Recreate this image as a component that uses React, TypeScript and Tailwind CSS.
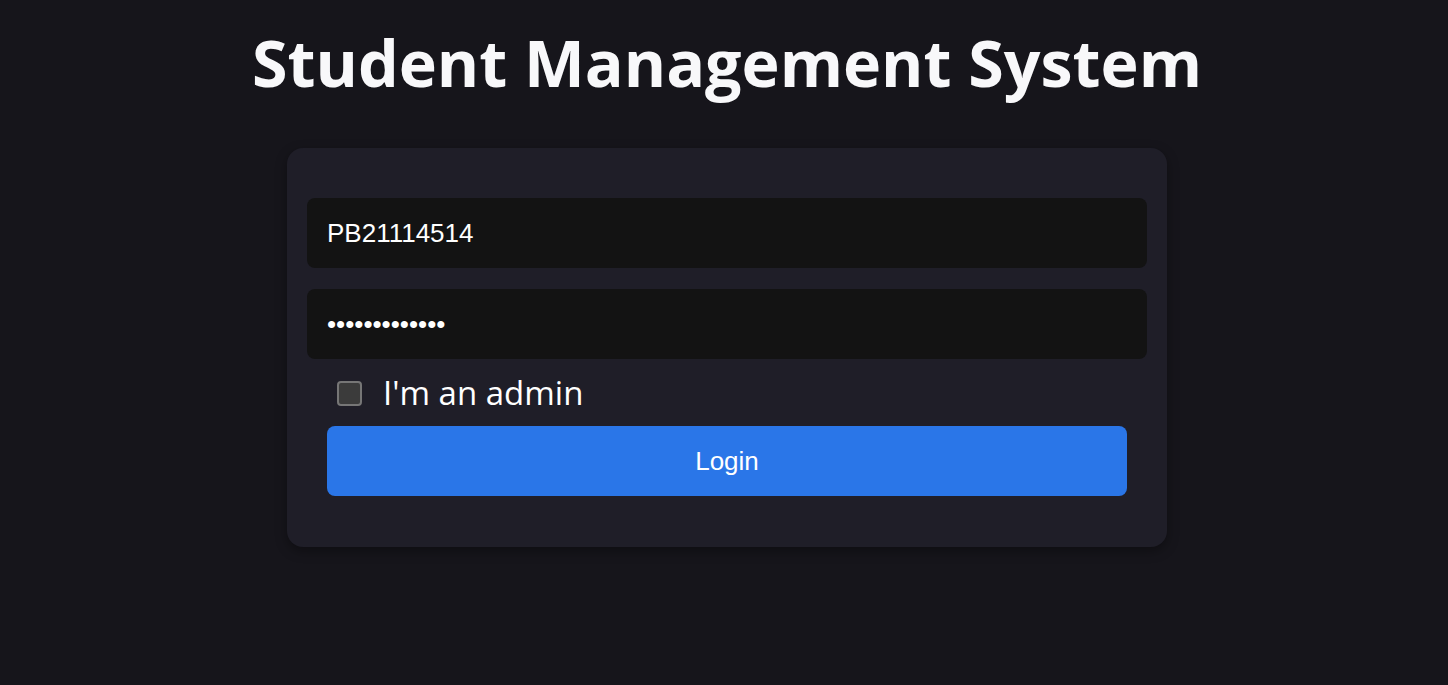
import React, { useState } from "react";

const App: React.FC = () => {
    const [studentId, setStudentId] = useState("PB21114514");
    const [password, setPassword] = useState("1234567890123");
    const [isAdmin, setIsAdmin] = useState(false);

    return (
        <div className="min-h-screen w-full bg-[#16151b] pl-[6px] flex flex-col items-center font-['Open_Sans',sans-serif]">
            <h1 className="mt-[22px] text-[64.5px] leading-[80px] font-bold text-[#f8f8fa]">
                Student Management System
            </h1>

            <form
                className="mt-[46px] w-[880px] rounded-2xl bg-[#1f1e28] px-5 pt-[50px] pb-[51px] shadow-[0_4px_12px_rgba(0,0,0,0.35)] flex flex-col"
                onSubmit={(e) => e.preventDefault()}
            >
                <input
                    type="text"
                    value={studentId}
                    onChange={(e) => setStudentId(e.target.value)}
                    className="h-[70px] w-full rounded-lg bg-[#131313] px-5 text-[26px] text-white outline-none font-['Liberation_Sans',Arial,sans-serif]"
                />
                <input
                    type="password"
                    value={password}
                    onChange={(e) => setPassword(e.target.value)}
                    className="mt-[21px] h-[70px] w-full rounded-lg bg-[#131313] px-5 text-[26px] text-white outline-none font-['Liberation_Sans',Arial,sans-serif]"
                />

                <label className="mt-4 ml-[30px] flex items-center gap-[21px] cursor-pointer">
                    <input
                        type="checkbox"
                        checked={isAdmin}
                        onChange={(e) => setIsAdmin(e.target.checked)}
                        className="appearance-none h-[25px] w-[25px] rounded-[4px] border-2 border-[#767676] bg-[#3b3b3b] checked:bg-[#2a76e8]"
                    />
                    <span className="text-[33px] leading-[36px] text-white">I'm an admin</span>
                </label>

                <button
                    type="submit"
                    className="mt-[15px] mx-5 h-[70px] rounded-lg bg-[#2a76e8] text-[26px] text-white font-['Liberation_Sans',Arial,sans-serif]"
                >
                    Login
                </button>
            </form>
        </div>
    );
};

export default App;
